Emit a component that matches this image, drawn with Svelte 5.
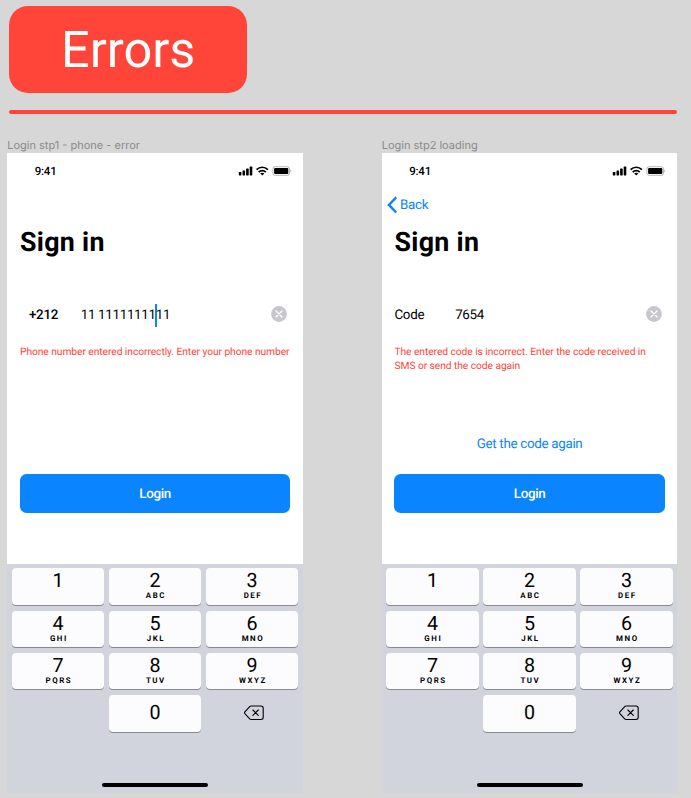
<script>
  const screens = [
    {
      title: 'Login stp1 - phone - error',
      back: false,
      label: '+212',
      before: '11 11111111',
      after: '11',
      caret: true,
      error: ['Phone number entered incorrectly. Enter your phone number'],
      link: ''
    },
    {
      title: 'Login stp2 loading',
      back: true,
      label: 'Code',
      before: '7654',
      after: '',
      caret: false,
      error: ['The entered code is incorrect. Enter the code received in', 'SMS or send the code again'],
      link: 'Get the code again'
    }
  ];
  const keys = [
    ['1', ''], ['2', 'ABC'], ['3', 'DEF'],
    ['4', 'GHI'], ['5', 'JKL'], ['6', 'MNO'],
    ['7', 'PQRS'], ['8', 'TUV'], ['9', 'WXYZ']
  ];
</script>

<main>
  <h1 class="banner"><span>Errors</span></h1>
  <div class="rule"></div>
  <div class="screens">
    {#each screens as s}
      <section>
        <div class="caption">{s.title}</div>
        <div class="phone">
          <div class="status">
            <span class="time">9:41</span>
            <svg class="indicators" width="54" height="12" viewBox="0 0 54 12">
              <rect x="0.8" y="7" width="2.6" height="3.4" rx=".6" />
              <rect x="4.5" y="5.5" width="2.6" height="4.9" rx=".6" />
              <rect x="8.1" y="3.6" width="2.6" height="6.8" rx=".6" />
              <rect x="11.7" y="1.6" width="2.6" height="8.8" rx=".6" />
              <g fill="none" stroke="#000" stroke-width="1.7">
                <path d="M18.6 4.7C21.8 1.4 26.7 1.4 29.9 4.7" />
                <path d="M20.7 7.100C22.7 5.100 25.8 5.100 27.8 7.100" />
              </g>
              <path d="M22.200 8.500C23.400 7.400 25.100 7.400 26.300 8.500L24.250 10.600Z" />
              <rect x="34.9" y="1.7" width="16.6" height="8.6" rx="2.2" fill="none" stroke="#000" stroke-opacity=".35" stroke-width=".8" />
              <rect x="36.1" y="2.9" width="14.2" height="6.2" rx="1" />
              <path d="M52.5 4.6c1 .4 1 2.400 0 2.800z" opacity=".4" />
            </svg>
          </div>
          <div class="nav">
            {#if s.back}
              <svg width="11" height="18" viewBox="0 0 11 18"><path d="M9.200 1.300L1.900 8.900L9.200 16.500" fill="none" stroke="#0a84ff" stroke-width="2.400" /></svg>
              <span>Back</span>
            {/if}
          </div>
          <h2>Sign in</h2>
          <div class="field">
            <span class="label" class:prefix={s.caret}>{s.label}</span>
            <span class="value">{s.before}{#if s.caret}<i class="caret"></i>{/if}{s.after}</span>
            <svg class="clear" width="16" height="16" viewBox="0 0 16 16">
              <circle cx="8" cy="8" r="7.900" fill="#c7c7cc" />
              <path d="M5 5L11 11M11 5L5 11" stroke="#fff" stroke-width="1.300" stroke-linecap="round" />
            </svg>
          </div>
          <div class="error">
            {#each s.error as line}<div>{line}</div>{/each}
          </div>
          <div class="link">{s.link}</div>
          <div class="login">Login</div>
          <div class="keyboard">
            <div class="keys">
              {#each keys as [digit, letters]}
                <div class="key"><b>{digit}</b><small>{letters}</small></div>
              {/each}
              <span></span>
              <div class="key zero"><b>0</b></div>
              <div class="delete">
                <svg width="20" height="16" viewBox="0 0 20 16" fill="none" stroke="#000" stroke-width="1.100">
                  <path d="M7 1H17Q19.200 1 19.200 3.200V12.300Q19.200 14.500 17 14.500H7Q6.300 14.500 5.700 13.900L.9 8.700Q0 7.800 .9 6.800L5.700 1.600Q6.300 1 7 1Z" />
                  <path d="M8.900 5L14.300 10.400M14.300 5L8.900 10.400" stroke-linecap="round" />
                </svg>
              </div>
            </div>
            <div class="home"></div>
          </div>
        </div>
      </section>
    {/each}
  </div>
</main>

<style>
  :global(body) { background: #d7d7d7; }
  main {
    box-sizing: border-box;
    width: 691px;
    height: 798px;
    padding: 6.400px 0 0 7.200px;
    overflow: hidden;
    background: #d7d7d7;
    font-family: Roboto, "Liberation Sans", sans-serif;
    text-rendering: geometricPrecision;
    color: #000;
  }
  .banner {
    display: flex;
    justify-content: center;
    align-items: center;
    box-sizing: border-box;
    width: 237.400px;
    height: 86.800px;
    margin: 0 0 0 2.300px;
    padding-top: 2px;
    border-radius: 19px;
    background: #ff453a;
    color: #fff;
    font-size: 50.500px;
    font-weight: 400;
  }
  .rule {
    width: 667.500px;
    height: 3.200px;
    margin: 17.200px 0 0 2.300px;
    border-radius: 2px;
    background: #ff453a;
  }
  .screens { display: flex; gap: 78.700px; margin-top: 23.400px; }
  section { width: 295.800px; }
  .caption {
    height: 16px;
    line-height: 16px;
    font-family: Inter, sans-serif;
    font-size: 11px;
    color: #8a8a8a;
    white-space: nowrap;
  }
  .phone { height: 640px; background: #fff; display: flex; flex-direction: column; }
  .status {
    display: flex;
    justify-content: space-between;
    align-items: center;
    height: 36px;
    flex: none;
    padding: 0 11px 0 27.500px;
  }
  .time { font-size: 11.500px; font-weight: 500; letter-spacing: -.2px; }
  .nav {
    display: flex;
    align-items: center;
    gap: 2px;
    height: 32px;
    flex: none;
    padding-left: 5.300px;
    color: #0a84ff;
    font-size: 13.400px;
    letter-spacing: -.32px;
  }
  .nav span { padding-top: 2px; }
  h2 {
    height: 42px;
    flex: none;
    margin: 0 0 0 12.800px;
    font-size: 26.800px;
    line-height: 42px;
    font-weight: 700;
    letter-spacing: .3px;
  }
  .field {
    display: flex;
    align-items: center;
    height: 36px;
    flex: none;
    margin: 33.500px 15.500px 0 12.800px;
    font-size: 13.400px;
    letter-spacing: -.32px;
  }
  .label { box-sizing: border-box; width: 60.700px; padding-top: 2px; }
  .prefix { padding-left: 9px; font-weight: 500; }
  .value { flex: 1; display: flex; align-items: center; padding-top: 2px; white-space: pre; }
  .caret { width: 2px; height: 23px; margin: 0 -1px; background: #0a84ff; }
  .clear { flex: none; }
  .error {
    height: 40px;
    flex: none;
    margin: 12.500px 0 0 12.800px;
    font-size: 10.260px;
    line-height: 14px;
    letter-spacing: -.06px;
    color: #ff453a;
    white-space: nowrap;
  }
  .link {
    height: 20px;
    flex: none;
    margin-top: 50px;
    line-height: 20px;
    text-align: center;
    color: #0a84ff;
    font-size: 13.400px;
    letter-spacing: -.32px;
  }
  .login {
    display: flex;
    justify-content: center;
    align-items: center;
    box-sizing: border-box;
    height: 39.500px;
    flex: none;
    margin: 19px 12.600px 0;
    padding-top: 1.500px;
    border-radius: 6.500px;
    background: #0a84ff;
    color: #fff;
    font-size: 13.400px;
    font-weight: 500;
    letter-spacing: -.32px;
  }
  .keyboard {
    display: flex;
    flex-direction: column;
    justify-content: space-between;
    align-items: center;
    box-sizing: border-box;
    height: 229px;
    flex: none;
    margin-top: auto;
    padding: 4.500px 4.700px 6px;
    background: #d1d4dc;
  }
  .keys {
    display: grid;
    grid-template-columns: repeat(3, 1fr);
    grid-auto-rows: 36.300px;
    gap: 6px 4.700px;
    width: 100%;
  }
  .key {
    display: flex;
    flex-direction: column;
    align-items: center;
    border-radius: 4px;
    background: #fcfcfe;
    box-shadow: 0 1px 0 #898a8d;
  }
  .key b { height: 23px; line-height: 25px; font-size: 19.700px; font-weight: 400; }
  .key small {
    height: 10px;
    line-height: 10px;
    padding-left: 1.600px;
    font-size: 7.900px;
    font-weight: 700;
    letter-spacing: 1.550px;
  }
  .zero b { padding-top: 4.500px; }
  .delete { display: flex; align-items: center; justify-content: center; padding-left: 4px; }
  .home { width: 106px; height: 4px; border-radius: 2px; background: #000; }
</style>
